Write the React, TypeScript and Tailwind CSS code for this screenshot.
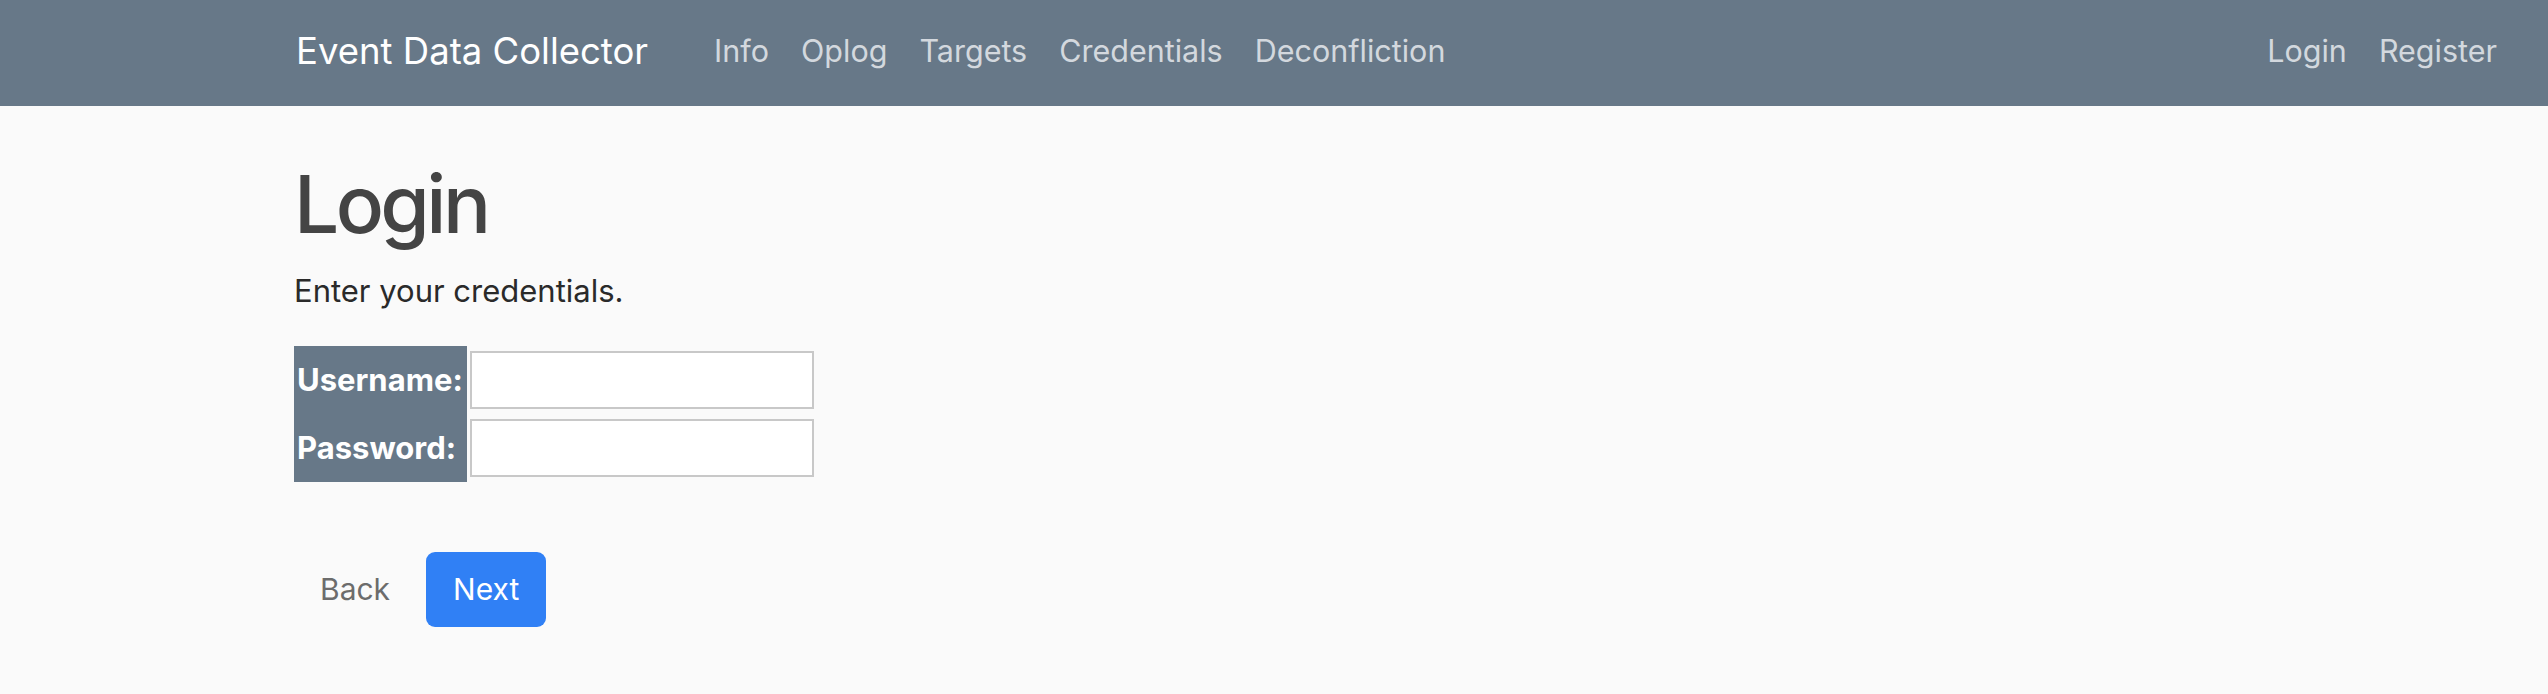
const navLinks = ["Info", "Oplog", "Targets", "Credentials", "Deconfliction"];

function NavBar() {
  return (
    <nav className="flex h-[106px] items-center bg-[#677888] pb-[3px] pl-[296px] pr-[35px]">
      <a className="mr-[50px] text-[36.5px] leading-none text-white">Event Data Collector</a>
      <ul className="flex">
        {navLinks.map((l) => (
          <li key={l}>
            <a className="px-[16px] text-[30.5px] leading-none text-[#d3d8de]">{l}</a>
          </li>
        ))}
      </ul>
      <ul className="ml-auto flex">
        <li>
          <a className="px-[16px] text-[30.5px] leading-none text-[#d3d8de]">Login</a>
        </li>
        <li>
          <a className="px-[16px] text-[30.5px] leading-none text-[#d3d8de]">Register</a>
        </li>
      </ul>
    </nav>
  );
}

export default function App() {
  return (
    <div className="min-h-[694px] bg-[#fafafa] font-['Inter',sans-serif]">
      <NavBar />
      <main className="pl-[294px] pt-[58px]">
        <h1 className="text-[80px] leading-none font-medium tracking-[-0.045em] text-[#444444]">
          Login
        </h1>
        <p className="mt-[31px] text-[31px] leading-none text-[#2a2a2a]">Enter your credentials.</p>

        <table className="mt-[40px] border-collapse">
          <tbody>
            <tr>
              <th className="h-[68px] bg-[#677888] pl-[3px] pr-[4px] text-left text-[31px] font-bold text-white">
                Username:
              </th>
              <td className="pl-[3px]">
                <input
                  type="text"
                  className="block h-[58px] w-[344px] border-2 border-[#c8c8c8] bg-white"
                />
              </td>
            </tr>
            <tr>
              <th className="h-[68px] bg-[#677888] pl-[3px] pr-[4px] text-left text-[31px] font-bold text-white">
                Password:
              </th>
              <td className="pl-[3px]">
                <input
                  type="password"
                  className="block h-[58px] w-[344px] border-2 border-[#c8c8c8] bg-white"
                />
              </td>
            </tr>
          </tbody>
        </table>

        <div className="mt-[70px] flex items-center gap-[10px]">
          <button className="h-[75px] px-[26px] text-[30px] text-[#6c6c6c]">Back</button>
          <button className="h-[75px] rounded-[9px] bg-[#3080f5] px-[27px] text-[30px] text-white">
            Next
          </button>
        </div>
      </main>
    </div>
  );
}
